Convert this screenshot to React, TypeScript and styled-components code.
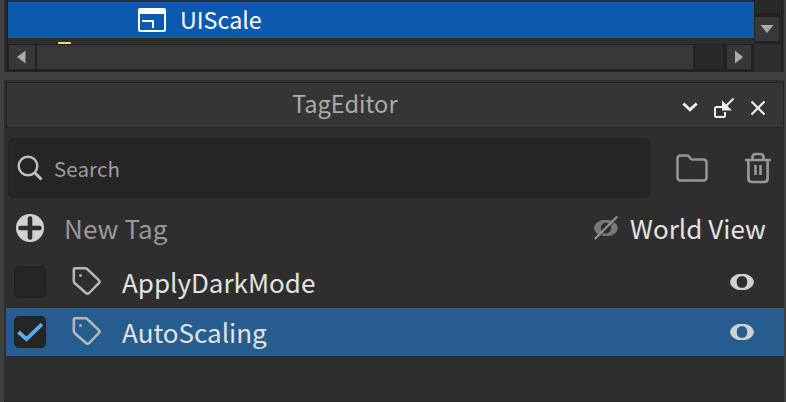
import React from "react";
import styled, { createGlobalStyle } from "styled-components";

const GlobalStyle = createGlobalStyle`
  * { box-sizing: border-box; }
  html, body { margin: 0; height: 100%; overflow: hidden; background: #404040; }
  body { font-family: "Noto Sans CJK SC", "Noto Sans", sans-serif; }
  svg { display: block; flex: none; }
`;

const Window = styled.main`
  width: 786px;
  height: 402px;
  padding: 0 2px 0 4px;
  display: flex;
  flex-direction: column;
  gap: 8px;
  background: #404040;
  overflow: hidden;
`;

const Explorer = styled.section`
  height: 72px;
  flex: none;
  display: flex;
  background: #2e2e2e;
  border-left: 2px solid #2b2b2b;
  border-right: 1px solid #2e2e2e;
`;

const ExplorerMain = styled.div`
  width: 748px;
  height: 72px;
  flex: none;
  border-left: 2px solid #222;
  display: flex;
  flex-direction: column;
`;

const TreeItem = styled.div`
  height: 36px;
  margin-top: 2px;
  padding-left: 130px;
  display: flex;
  align-items: center;
  background: #0c5ab0;
`;

const TreeGap = styled.div`
  height: 6px;
  padding: 4px 0 0 50px;
`;

const FolderPeek = styled.div`
  width: 13px;
  height: 2px;
  border-radius: 1px 1px 0 0;
  background: #f8d775;
`;

const HorizontalScroll = styled.div`
  height: 28px;
  padding: 1px 1px 3px;
  display: flex;
  background: #222;
`;

const ScrollPart = styled.div<{ $w: number; $gap?: number; $dark?: boolean }>`
  width: ${(p) => p.$w}px;
  height: 24px;
  margin-right: ${(p) => p.$gap ?? 0}px;
  flex: none;
  display: flex;
  align-items: center;
  justify-content: center;
  background: ${(p) => (p.$dark ? "#292929" : "#383838")};
`;

const VerticalScroll = styled.div`
  width: 29px;
  height: 72px;
  flex: none;
  border-right: 2px solid #222;
`;

const VerticalTrack = styled.div`
  height: 44px;
  width: 26px;
  padding-left: 1px;
  display: flex;
  flex-direction: column;
  justify-content: space-between;
  padding-bottom: 3px;
  background: #222;
`;

const TrackFill = styled.div`
  width: 24px;
  height: 13px;
  background: #292929;
`;

const Panel = styled.section`
  height: 322px;
  padding: 2px 0 0 2px;
  background: #2e2e2e;
  border-bottom: 1px solid #242424;
`;

const PanelHeader = styled.header`
  height: 46px;
  display: flex;
  align-items: center;
  justify-content: space-between;
  padding: 0 17px 0 285px;
  border: 1px solid #222;
  background: #353535;
`;

const HeaderButtons = styled.div`
  display: flex;
  align-items: center;
  padding-top: 8px;
`;

const Toolbar = styled.div`
  height: 60px;
  margin: 10px 0 0 2px;
  display: flex;
  align-items: center;
`;

const SearchBox = styled.div`
  width: 642px;
  height: 60px;
  padding-left: 8px;
  display: flex;
  align-items: center;
  gap: 10px;
  border: 1px solid #222;
  border-radius: 5px;
  background: #252525;
`;

const ToolIcon = styled.div<{ $left: number }>`
  margin-left: ${(p) => p.$left}px;
`;

const ActionRow = styled.div`
  height: 60px;
  display: flex;
  align-items: center;
  padding: 0 18px 0 9px;
`;

const WorldView = styled.div`
  margin-left: auto;
  display: flex;
  align-items: center;
  gap: 10px;
`;

const TagRow = styled.div<{ $selected?: boolean }>`
  height: 48px;
  margin-bottom: 2px;
  padding: 0 30px 0 8px;
  display: flex;
  align-items: center;
  background: ${(p) => (p.$selected ? "#265d8f" : "transparent")};
`;

const Checkbox = styled.div`
  width: 32px;
  height: 32px;
  margin-right: 25px;
  display: flex;
  align-items: center;
  justify-content: center;
  border: 1px solid #202020;
  border-radius: 5px;
  background: #252525;
`;

const Eye = styled.div`
  margin-left: auto;
`;

const Label = styled.span<{ $size: number; $color: string; $spacing?: number; $left?: number; $shift?: number }>`
  font-size: ${(p) => p.$size}px;
  line-height: 36px;
  color: ${(p) => p.$color};
  letter-spacing: ${(p) => p.$spacing ?? 0}px;
  margin-left: ${(p) => p.$left ?? 0}px;
  margin-bottom: ${(p) => p.$shift ?? 0}px;
  white-space: nowrap;
`;

const WindowIcon = () => (
  <svg width="28" height="24" viewBox="0 0 28 24" fill="none" stroke="#fff" strokeWidth="2">
    <rect x="1" y="1" width="26" height="22" rx="1" />
    <path d="M1 3.5h26" strokeWidth="5" />
    <path d="M4 13h11v7" />
  </svg>
);

const Triangle = ({ d }: { d: string }) => (
  <svg width="24" height="24" viewBox="0 0 24 24" fill="#aaa"><path d={d} /></svg>
);

const TagIcon = () => (
  <svg width="32" height="32" viewBox="0 0 32 32" fill="none" stroke="#b8b8b8" strokeWidth="2.5" strokeLinejoin="round">
    <path d="M4 2.300H14.300q1.200 0 2 .8L27.800 14.200q1.500 1.500 0 3L18.200 27q-1.600 1.400-3.200 0L3.800 17.200q-1-.9-1-2.200V3.500q0-1.200 1.200-1.200z" />
    <circle cx="9.500" cy="9.500" r="1.500" fill="#aaa" stroke="none" />
  </svg>
);

const EyeIcon = () => (
  <svg width="24" height="16" viewBox="0 0 24 16">
    <path fillRule="evenodd" fill="#d0d0d0" d="M9 0h6C19.500 .6 23.700 4 23.900 8 23.700 12 19.500 15.400 15 16H9C4.500 15.400 .3 12 .1 8 .3 4 4.500 .6 9 0zm3 2.200C8.600 2.200 6.800 4.300 6.800 8s1.800 5.800 5.200 5.800 5.200-2.100 5.200-5.800-1.800-5.800-5.200-5.800z" />
  </svg>
);

const tags = [
  { name: "ApplyDarkMode", checked: false },
  { name: "AutoScaling", checked: true },
];

export default function App() {
  return (
    <Window>
      <GlobalStyle />
      <Explorer>
        <ExplorerMain>
          <TreeItem>
            <WindowIcon />
            <Label $size={23.3} $color="#fff" $left={14} $shift={2}>UIScale</Label>
          </TreeItem>
          <TreeGap><FolderPeek /></TreeGap>
          <HorizontalScroll>
            <ScrollPart $w={26} $gap={2}><Triangle d="M15.500 5.500v13L7 12z" /></ScrollPart>
            <ScrollPart $w={656} $gap={2} />
            <ScrollPart $w={28} $gap={4} $dark />
            <ScrollPart $w={24}><Triangle d="M8 5.500v13l8-6.500z" /></ScrollPart>
          </HorizontalScroll>
        </ExplorerMain>
        <VerticalScroll>
          <VerticalTrack>
            <TrackFill />
            <ScrollPart $w={24}><Triangle d="M5.500 8h13L12 16z" /></ScrollPart>
          </VerticalTrack>
        </VerticalScroll>
      </Explorer>

      <Panel>
        <PanelHeader>
          <Label $size={23.6} $color="#aaa" $shift={4}>TagEditor</Label>
          <HeaderButtons>
            <svg width="86" height="24" viewBox="0 0 86 24" fill="none" stroke="#eee">
              <path d="M3.300 6.500l6.700 6.300 6.700-6.300" strokeWidth="3" />
              <path d="M42.500 10h-6q-1.500 0-1.500 1.500v7q0 1.500 1.500 1.500h7q1.500 0 1.500-1.500V15" strokeWidth="2" />
              <path d="M53.500 1.500L45 10" strokeWidth="2" />
              <path d="M42 3.500v10h10z" fill="#eee" stroke="none" />
              <path d="M71.500 4.500l13 13m0-13l-13 13" strokeWidth="2.200" />
            </svg>
          </HeaderButtons>
        </PanelHeader>

        <Toolbar>
          <SearchBox>
            <svg width="27" height="27" viewBox="0 0 27 27" fill="none" stroke="#c0c0c0">
              <circle cx="11" cy="11" r="9.300" strokeWidth="2.400" />
              <path d="M17.500 17.500l7 7" strokeWidth="3" />
            </svg>
            <Label $size={20.5} $color="#9c9c9c" $spacing={0.1}>Search</Label>
          </SearchBox>
          <ToolIcon $left={26}>
            <svg width="32" height="28" viewBox="0 0 32 28" fill="none" stroke="#959595" strokeWidth="2.500" strokeLinejoin="round">
              <path d="M4.500 1.500h6.500q1.300 0 2.300 1.300l1.500 1.900q.7.800 1.700.8H27.500q3 0 3 3v15q0 3-3 3H4.500q-3 0-3-3V4.500q0-3 3-3z" />
            </svg>
          </ToolIcon>
          <ToolIcon $left={37}>
            <svg width="26" height="32" viewBox="0 0 26 32" fill="none" stroke="#979797" strokeWidth="2.700">
              <path d="M0 8h26M7.500 8V5.500q0-3.500 3.500-3.500h4q3.500 0 3.500 3.500V8" />
              <path d="M3.400 8v18.500q0 3.500 3.500 3.500h12.200q3.500 0 3.500-3.500V8" />
              <path d="M10.500 13v10M15.500 13v10" />
            </svg>
          </ToolIcon>
        </Toolbar>

        <ActionRow>
          <svg width="30" height="30" viewBox="0 0 30 30">
            <circle cx="15" cy="15" r="14" fill="#d2d2d2" />
            <path d="M15 5.500v19M5.500 15h19" stroke="#2e2e2e" strokeWidth="4.600" strokeLinecap="round" />
          </svg>
          <Label $size={26} $color="#999" $spacing={0.1} $left={19}>New Tag</Label>
          <WorldView>
            <svg width="28" height="28" viewBox="0 0 28 28">
              <path fillRule="evenodd" fill="#777" d="M11 6h6c4.500 .6 8.700 4 8.900 8-.2 4-4.400 7.400-8.900 8h-6c-4.500-.6-8.700-4-8.900-8C2.300 10 6.500 6.600 11 6zm3 2.600a5.200 5.400 0 1 0 0 10.800 5.200 5.400 0 0 0 0-10.800z" />
              <path d="M4.500 26L27 3.500" stroke="#2e2e2e" strokeWidth="1" />
              <path d="M2.800 25L25.300 2.500" stroke="#929292" strokeWidth="2.200" />
            </svg>
            <Label $size={26} $color="#e2e2e2" $spacing={0.05}>World View</Label>
          </WorldView>
        </ActionRow>

        {tags.map((tag) => (
          <TagRow key={tag.name} $selected={tag.checked}>
            <Checkbox>
              {tag.checked && (
                <svg width="28" height="22" viewBox="0 0 28 22" fill="none" stroke="#58aaf0" strokeWidth="3.800">
                  <path d="M2.500 11l8 7.200L26 3.200" />
                </svg>
              )}
            </Checkbox>
            <TagIcon />
            <Label $size={26} $color="#e2e2e2" $left={19}>{tag.name}</Label>
            <Eye><EyeIcon /></Eye>
          </TagRow>
        ))}
      </Panel>
    </Window>
  );
}
